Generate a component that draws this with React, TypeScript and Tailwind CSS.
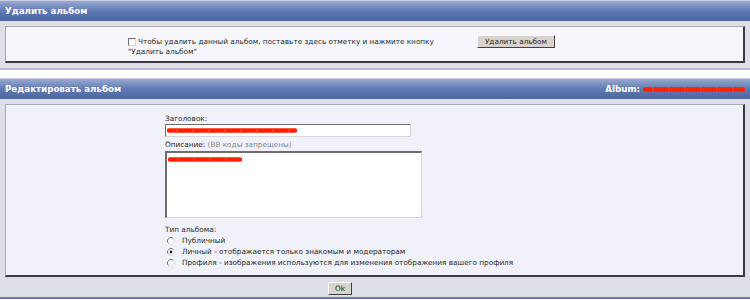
import React from "react";

const font = { fontFamily: '"DejaVu Sans", Verdana, sans-serif' };

function Radio({ checked }: { checked?: boolean }) {
  return (
    <svg width="8" height="8" viewBox="0 0 8 8" className="shrink-0">
      <circle cx="4" cy="4" r="3.5" fill="#fff" />
      <path d="M6.5 1.5 A3.5 3.5 0 0 0 1.5 6.5" fill="none" stroke="#7a7a7a" strokeWidth="1" />
      <path d="M1.5 6.5 A3.5 3.5 0 0 0 6.5 1.5" fill="none" stroke="#d8d8d8" strokeWidth="1" />
      {checked && <circle cx="4" cy="4" r="1.4" fill="#222" />}
    </svg>
  );
}

function Scribble({ width }: { width: number }) {
  const ticks = [];
  for (let x = 10; x < width - 4; x += 16) ticks.push(x);
  return (
    <svg width={width} height="7" viewBox={`0 0 ${width} 7`} className="block">
      <line x1="2" y1="3.5" x2={width - 2} y2="3.5" stroke="#ff2200" strokeWidth="4.5" strokeLinecap="round" />
      {ticks.map((x) => (
        <line key={x} x1={x} y1="1" x2={x} y2="6" stroke="#ff5a3c" strokeWidth="0.8" />
      ))}
    </svg>
  );
}

function Header({ title, right }: { title: string; right?: boolean }) {
  return (
    <div className="h-[21px] flex items-center justify-between pl-[5px] pr-[5px] bg-gradient-to-b from-[#9aaad0] via-[#5f7ab4] to-[#4b66a2] border-t border-[#c9cfe0]">
      <span className="text-white font-bold text-[8.7px] leading-[11px]">{title}</span>
      {right && (
        <span className="flex items-center gap-[3px]">
          <span className="text-white font-bold text-[8.7px] leading-[11px]">Album:</span>
          <Scribble width={102} />
        </span>
      )}
    </div>
  );
}

export default function App() {
  return (
    <div className="w-[750px] h-[300px] bg-white text-[#2a2a2a] overflow-hidden" style={font}>
      <Header title="Удалить альбом" />
      <div className="bg-[#dedfe8] pt-[5px] pb-[5px] px-[5px] h-[47px]">
        <div className="h-[37px] bg-[#f6f6fc] border-t border-l border-[#a9a9b4] border-r-2 border-b-2 border-r-[#3a3a40] border-b-[#3a3a40] flex items-start pl-[122px] pt-[8px]">
          <div className="w-[349px] text-[7.3px] leading-[10px] whitespace-nowrap pt-[2px]">
            <div className="flex items-center gap-[2px]">
              <span className="inline-block w-[8px] h-[8px] bg-white border-t border-l border-[#707070] border-r border-b border-r-[#d4d4d4] border-b-[#d4d4d4]" />
              <span>Чтобы удалить данный альбом, поставьте здесь отметку и нажмите кнопку</span>
            </div>
            <div>"Удалить альбом"</div>
          </div>
          <div className="w-[78px] h-[13px] bg-[#d7d4cd] border-t border-l border-white border-r border-b border-r-[#404040] border-b-[#404040] flex items-center justify-center text-[7.3px] leading-[10px]">
            Удалить альбом
          </div>
        </div>
      </div>
      <div className="h-[2px] bg-[#b9bce0]" />
      <div className="h-[8px] bg-white" />
      <Header title="Редактировать альбом" right />
      <div className="bg-[#dedfe8] pt-[5px] px-[5px] h-[178px]">
        <div className="h-[173px] bg-[#f1f1fa] border-t border-l border-[#a9a9b4] border-r-2 border-b-2 border-r-[#3a3a40] border-b-[#3a3a40] pl-[159px] pt-[9px] text-[7.3px] leading-[10px]">
          <div className="h-[10px]">Заголовок:</div>
          <div className="w-[246px] h-[13px] bg-white border-t border-l border-[#6e6e6e] border-r border-b border-r-[#d8d8d8] border-b-[#d8d8d8] pl-[1px] pt-[2px]">
            <Scribble width={130} />
          </div>
          <div className="h-[14px] pt-[3px]">
            Описание: <span className="text-[#8a8a8a]">(BB коды запрещены)</span>
          </div>
          <div className="w-[257px] h-[67px] bg-white border-t-2 border-l-2 border-[#6e6e6e] border-r border-b border-r-[#d8d8d8] border-b-[#d8d8d8] pl-[1px] pt-[3px]">
            <Scribble width={74} />
          </div>
          <div className="h-[10px] mt-[7px]">Тип альбома:</div>
          <div className="flex flex-col pl-[2px]">
            <div className="flex items-center gap-[7px] h-[11px]"><Radio /><span>Публичный</span></div>
            <div className="flex items-center gap-[7px] h-[11px]"><Radio checked /><span>Личный - отображается только знакомым и модераторам</span></div>
            <div className="flex items-center gap-[7px] h-[11px]"><Radio /><span>Профиля - изображения используются для изменения отображения вашего профиля</span></div>
          </div>
        </div>
      </div>
      <div className="bg-[#dcdde6] h-[20px] pl-[328px] pt-[5px]">
        <div className="w-[24px] h-[13px] bg-[#d7d4cd] border-t border-l border-white border-r border-b border-r-[#404040] border-b-[#404040] flex items-center justify-center text-[7.3px] leading-[10px]">
          Ok
        </div>
      </div>
      <div className="h-[2px] bg-[#6d72c2]" />
    </div>
  );
}
